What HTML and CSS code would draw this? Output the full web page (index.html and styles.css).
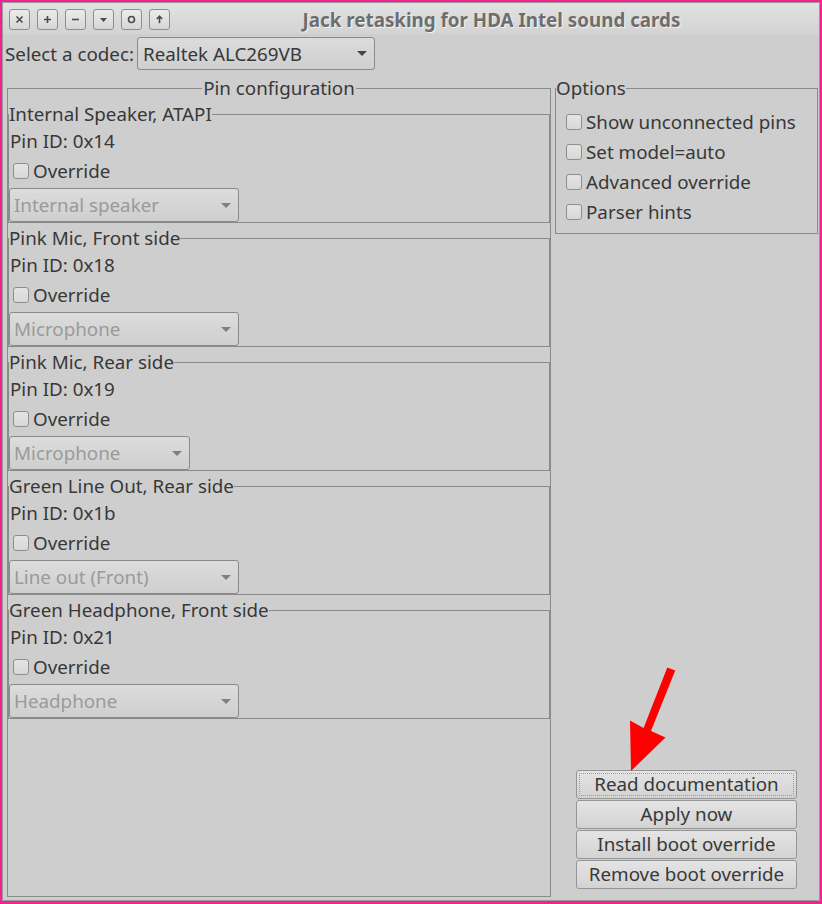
FILE: index.html
```html
<!DOCTYPE html>
<html lang="en">

<head>
  <meta charset="UTF-8" />
  <title>Jack retasking for HDA Intel sound cards</title>
  <link rel="stylesheet" href="styles.css">
</head>

<body>
  <div class="window">
    <div class="titlebar">
      <div class="wm-buttons">
        <span class="wm-btn"><svg viewBox="0 0 9 9"><path d="M1.5 1.5l6 6M7.5 1.5l-6 6" /></svg></span>
        <span class="wm-btn"><svg viewBox="0 0 9 9"><path d="M4.5 1v7M1 4.5h7" /></svg></span>
        <span class="wm-btn"><svg viewBox="0 0 9 9"><path d="M1 4.5h7" /></svg></span>
        <span class="wm-btn"><svg viewBox="0 0 9 9"><path class="fill" d="M1 3h7l-3.5 4z" /></svg></span>
        <span class="wm-btn"><svg viewBox="0 0 9 9"><circle cx="4.5" cy="4.5" r="3" /></svg></span>
        <span class="wm-btn"><svg viewBox="0 0 9 9"><path d="M4.5 1.2v7M1.8 4l2.7-2.8L7.2 4" /></svg></span>
      </div>
      <div class="title">Jack retasking for HDA Intel sound cards</div>
    </div>

    <div class="codec-row">
      <span>Select a codec:</span>
      <div class="combo codec">
        <span>Realtek ALC269VB</span>
        <i class="drop"></i>
      </div>
    </div>

    <div class="main">
      <fieldset class="frame pins">
        <legend class="centered">Pin configuration</legend>
        <div class="pin-list">
          <fieldset class="frame pin">
            <legend>Internal Speaker, ATAPI</legend>
            <div class="pin-id">Pin ID: 0x14</div>
            <label class="check"><span class="box"></span>Override</label>
            <div class="combo disabled"><span>Internal speaker</span><i class="drop"></i></div>
          </fieldset>
          <fieldset class="frame pin">
            <legend>Pink Mic, Front side</legend>
            <div class="pin-id">Pin ID: 0x18</div>
            <label class="check"><span class="box"></span>Override</label>
            <div class="combo disabled"><span>Microphone</span><i class="drop"></i></div>
          </fieldset>
          <fieldset class="frame pin">
            <legend>Pink Mic, Rear side</legend>
            <div class="pin-id">Pin ID: 0x19</div>
            <label class="check"><span class="box"></span>Override</label>
            <div class="combo disabled narrow"><span>Microphone</span><i class="drop"></i></div>
          </fieldset>
          <fieldset class="frame pin">
            <legend>Green Line Out, Rear side</legend>
            <div class="pin-id">Pin ID: 0x1b</div>
            <label class="check"><span class="box"></span>Override</label>
            <div class="combo disabled"><span>Line out (Front)</span><i class="drop"></i></div>
          </fieldset>
          <fieldset class="frame pin">
            <legend>Green Headphone, Front side</legend>
            <div class="pin-id">Pin ID: 0x21</div>
            <label class="check"><span class="box"></span>Override</label>
            <div class="combo disabled"><span>Headphone</span><i class="drop"></i></div>
          </fieldset>
        </div>
      </fieldset>

      <div class="side">
        <fieldset class="frame options">
          <legend>Options</legend>
          <label class="check"><span class="box"></span>Show unconnected pins</label>
          <label class="check"><span class="box"></span>Set model=auto</label>
          <label class="check"><span class="box"></span>Advanced override</label>
          <label class="check"><span class="box"></span>Parser hints</label>
        </fieldset>

        <div class="actions">
          <button class="focused"><span>Read documentation</span></button>
          <button><span>Apply now</span></button>
          <button><span>Install boot override</span></button>
          <button><span>Remove boot override</span></button>
        </div>
      </div>
    </div>

    <!-- red annotation arrow drawn over the window -->
    <svg class="note-arrow" width="822" height="904" viewBox="0 0 822 904">
      <polygon points="667.3,667.5 675.2,670.6 651,731 665.5,737.5 631,771 630,720.5 643.6,728" />
    </svg>
  </div>
</body>

</html>
```

FILE: styles.css
```css
* {
  box-sizing: border-box;
}

html,
body {
  margin: 0;
  height: 904px;
}

body {
  background: #f5218e;
  padding: 2px 2px 3px 2px;
  font-family: "Noto Sans", "Open Sans", sans-serif;
  font-size: 18.8px;
  color: #383838;
  overflow: hidden;
}

.window {
  height: 100%;
  background: #cecece;
  border: 1px solid #9a9a9a;
  display: flex;
  flex-direction: column;
}

.titlebar {
  height: 31px;
  display: flex;
  align-items: flex-start;
  padding: 6px 6px 0 6px;
  background: linear-gradient(#e2e2e2, #d3d3d3);
}

.wm-buttons {
  display: flex;
  gap: 7px;
}

.wm-btn {
  width: 21px;
  height: 21px;
  border: 1px solid #8e8e8e;
  border-radius: 3px;
  background: linear-gradient(#ececec, #d6d6d6);
  display: flex;
  align-items: center;
  justify-content: center;
}

.wm-btn svg {
  width: 9px;
  height: 9px;
  fill: none;
  stroke: #4a4a4a;
  stroke-width: 1.6;
}

.wm-btn svg .fill {
  fill: #4a4a4a;
  stroke: none;
}

.title {
  flex: 1;
  text-align: center;
  font-weight: bold;
  color: #6e6e6e;
  line-height: 22px;
  text-shadow: 1px 1px 0 #f2f2f2;
}

.codec-row {
  display: flex;
  align-items: center;
  gap: 3px;
  padding-left: 2px;
  margin-top: 3px;
}

.combo {
  height: 34px;
  border: 1px solid #8a8a8a;
  border-radius: 3px;
  background: linear-gradient(#dcdcdc, #cfcfcf);
  display: flex;
  align-items: center;
  justify-content: space-between;
  padding: 0 7px 0 5px;
  color: #383838;
}

.combo.codec {
  width: 238px;
  height: 33px;
}

.drop {
  width: 0;
  height: 0;
  border-left: 5px solid transparent;
  border-right: 5px solid transparent;
  border-top: 5px solid #444;
}

.combo.disabled {
  width: 230px;
  color: #9a9a9a;
  padding-left: 4px;
}

.combo.disabled .drop {
  border-top-color: #808080;
}

.combo.narrow {
  width: 181px;
}

.main {
  flex: 1;
  display: flex;
  gap: 4px;
  padding: 0 1px 3px 4px;
  margin-top: 6px;
  min-height: 0;
}

.frame {
  margin: 0;
  padding: 0;
  min-width: 0;
  border: 1px solid #8a8a8a;
}

.frame legend {
  padding: 0;
  line-height: 24px;
}

.frame legend.centered {
  margin: 0 auto;
  padding: 0 1px;
}

.pins {
  width: 544px;
}

.pin-list {
  display: flex;
  flex-direction: column;
  gap: 3px;
  padding-top: 2px;
}

.pin-id {
  line-height: 24px;
  margin-top: 3px;
  padding-left: 1px;
}

.check {
  display: flex;
  align-items: center;
  gap: 4px;
}

.box {
  width: 16px;
  height: 16px;
  border: 1px solid #8e8e8e;
  border-radius: 3px;
  background: linear-gradient(#e4e4e4, #d8d8d8);
}

.pin .check {
  height: 35px;
  padding-left: 4px;
}

.side {
  flex: 1;
  display: flex;
  flex-direction: column;
}

.options {
  padding: 7px 0 6px 0;
}

.options .check {
  height: 30px;
  padding-left: 10px;
}

.actions {
  margin-top: auto;
  margin-bottom: 8px;
  display: flex;
  flex-direction: column;
  align-items: center;
  gap: 1px;
}

.actions button {
  width: 221px;
  height: 29px;
  padding: 2px;
  border: 1px solid #959595;
  border-radius: 3px;
  background: linear-gradient(#e4e4e4, #d3d3d3);
  font-family: inherit;
  font-size: 18.8px;
  color: #383838;
}

.actions button span {
  display: block;
  height: 100%;
  line-height: 21px;
  border: 1px dotted transparent;
}

.actions button.focused span {
  border-color: #9a9a9a;
}

.note-arrow {
  position: absolute;
  left: 0;
  top: 0;
  pointer-events: none;
}

.note-arrow polygon {
  fill: #ff0000;
}
```
